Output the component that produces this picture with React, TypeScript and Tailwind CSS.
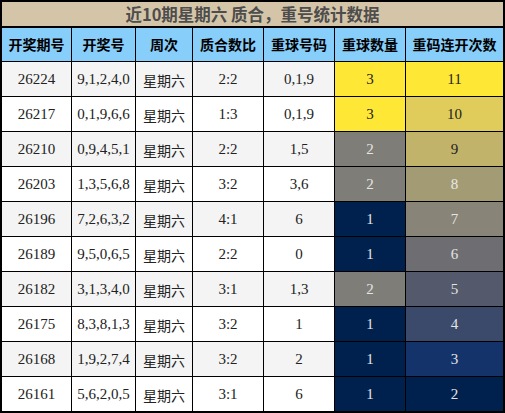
const rows = [
  ["26224", "9,1,2,4,0", "星期六", "2:2", "0,1,9", "3", "11"],
  ["26217", "0,1,9,6,6", "星期六", "1:3", "0,1,9", "3", "10"],
  ["26210", "0,9,4,5,1", "星期六", "2:2", "1,5", "2", "9"],
  ["26203", "1,3,5,6,8", "星期六", "3:2", "3,6", "2", "8"],
  ["26196", "7,2,6,3,2", "星期六", "4:1", "6", "1", "7"],
  ["26189", "9,5,0,6,5", "星期六", "2:2", "0", "1", "6"],
  ["26182", "3,1,3,4,0", "星期六", "3:1", "1,3", "2", "5"],
  ["26175", "8,3,8,1,3", "星期六", "3:2", "1", "1", "4"],
  ["26168", "1,9,2,7,4", "星期六", "3:2", "2", "1", "3"],
  ["26161", "5,6,2,0,5", "星期六", "3:1", "6", "1", "2"],
];

const headers = ["开奖期号", "开奖号", "周次", "质合数比", "重球号码", "重球数量", "重码连开次数"];

const countCls: Record<string, string> = {
  "3": "bg-[#ffe835] text-[#222]",
  "2": "bg-[#7f7d78] text-[#e4e4e4]",
  "1": "bg-[#00214d] text-[#e4e4e4]",
};

const runCls: Record<string, string> = {
  "11": "bg-[#ffe835] text-[#222]",
  "10": "bg-[#e0cc5a] text-[#222]",
  "9": "bg-[#c2b36a] text-[#222]",
  "8": "bg-[#a39b74] text-[#e8e8e8]",
  "7": "bg-[#888477] text-[#e4e4e4]",
  "6": "bg-[#6e6e72] text-[#e4e4e4]",
  "5": "bg-[#54596b] text-[#e4e4e4]",
  "4": "bg-[#3b4a6b] text-[#e4e4e4]",
  "3": "bg-[#15336b] text-[#e4e4e4]",
  "2": "bg-[#00214d] text-[#e4e4e4]",
};

const cols = "grid grid-cols-[69px_63px_56px_70px_70px_70px_97px] gap-x-px";
const serif = "font-['Liberation_Serif','Noto_Sans_CJK_SC',serif]";
const sans = "font-['Noto_Sans_CJK_SC','Noto_Sans',sans-serif]";

export default function App() {
  return (
    <div className="w-[505px] h-[413px] bg-white">
      <div className="border-2 border-black bg-black flex flex-col gap-y-px">
        <div className={`h-[24px] mb-px bg-[#d5c5a8] flex items-center justify-center text-[16.5px] font-bold text-[#4d4d4d] ${sans}`}>
          近10期星期六 质合，重号统计数据
        </div>
        <div className={`${cols} h-[33px]`}>
          {headers.map((h) => (
            <div key={h} className={`bg-[#87cefa] flex items-center justify-center text-[14px] font-bold text-black ${sans}`}>
              {h}
            </div>
          ))}
        </div>
        {rows.map((r, i) => {
          const base = i % 2 === 0 ? "bg-[#f4f4f4]" : "bg-white";
          return (
            <div key={r[0]} className={`${cols} h-[34px]`}>
              <div className={`${base} flex items-center justify-center text-[15px] text-[#222] ${serif}`}>{r[0]}</div>
              <div className={`${base} flex items-center justify-center text-[15px] text-[#222] ${serif}`}>{r[1]}</div>
              <div className={`${base} flex items-center justify-center text-[14px] text-[#222] pt-[3px] ${sans}`}>{r[2]}</div>
              <div className={`${base} flex items-center justify-center text-[15px] text-[#222] ${serif}`}>{r[3]}</div>
              <div className={`${base} flex items-center justify-center text-[15px] text-[#222] ${serif}`}>{r[4]}</div>
              <div className={`${countCls[r[5]]} flex items-center justify-center text-[15px] ${serif}`}>{r[5]}</div>
              <div className={`${runCls[r[6]]} flex items-center justify-center text-[15px] ${serif}`}>{r[6]}</div>
            </div>
          );
        })}
      </div>
    </div>
  );
}
